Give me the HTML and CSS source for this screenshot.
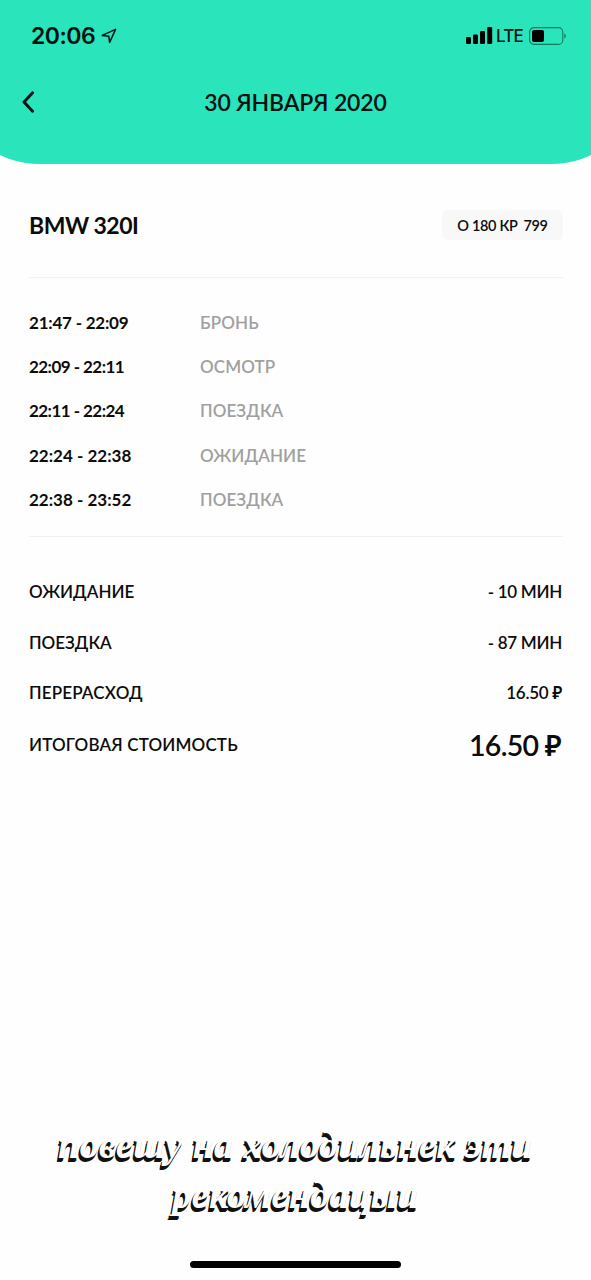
FILE: index.html
```html
<!DOCTYPE html>
<html lang="ru">

<head>
    <meta charset="UTF-8">
    <meta name="viewport" content="width=device-width, initial-scale=1.0">
    <title>30 января 2020</title>
    <link rel="stylesheet" href="styles.css">
</head>

<body>
    <!-- Header -->
    <header class="header">
        <div class="status-bar">
            <div class="status-left">
                <span class="clock">20:06</span>
                <svg class="location" width="16" height="16" viewBox="0 0 16 16">
                    <path d="M1.2 7.4 L14.6 1.4 L8.6 14.4 L7.8 8.2 Z" fill="none" stroke="#06120f" stroke-width="1.5" stroke-linejoin="round" />
                </svg>
            </div>
            <div class="status-right">
                <svg width="27" height="17" viewBox="0 0 27 17">
                    <rect x="0" y="10" width="5" height="7" rx="1.3" />
                    <rect x="7" y="7.5" width="5" height="9.5" rx="1.3" />
                    <rect x="14" y="4" width="5" height="13" rx="1.3" />
                    <rect x="21.2" y="0" width="5" height="17" rx="1.3" />
                </svg>
                <span class="network">LTE</span>
                <svg width="39" height="18" viewBox="0 0 39 18">
                    <rect x="0.6" y="0.6" width="33.2" height="16.8" rx="4.5" fill="none" stroke="#127a62" stroke-width="1.1" />
                    <rect x="3" y="3" width="12" height="12" rx="2" />
                    <path d="M35.3 6.2 Q38.6 9 35.3 11.8 Z" fill="#127a62" />
                </svg>
            </div>
        </div>
        <div class="title-bar">
            <a href="#" class="back">
                <svg width="14" height="22" viewBox="0 0 14 22">
                    <path d="M11.6 1.8 L3 11 L11.6 20.2" fill="none" stroke="#06120f" stroke-width="3" stroke-linejoin="round" stroke-linecap="round" />
                </svg>
            </a>
            <h1>30 ЯНВАРЯ 2020</h1>
        </div>
    </header>

    <main class="content">
        <!-- Car -->
        <section class="car">
            <h2>BMW 320I</h2>
            <div class="plate"><span>О 180 КР</span><span>799</span></div>
        </section>

        <!-- Timeline -->
        <section class="timeline">
            <div class="step"><span class="time narrow">21:47 - 22:09</span><span class="label">БРОНЬ</span></div>
            <div class="step"><span class="time narrower">22:09 - 22:11</span><span class="label">ОСМОТР</span></div>
            <div class="step"><span class="time narrower">22:11 - 22:24</span><span class="label">ПОЕЗДКА</span></div>
            <div class="step"><span class="time">22:24 - 22:38</span><span class="label">ОЖИДАНИЕ</span></div>
            <div class="step"><span class="time">22:38 - 23:52</span><span class="label">ПОЕЗДКА</span></div>
        </section>

        <!-- Summary -->
        <section class="summary">
            <div class="row"><span>ОЖИДАНИЕ</span><span class="value">- 10 МИН</span></div>
            <div class="row"><span>ПОЕЗДКА</span><span class="value">- 87 МИН</span></div>
            <div class="row"><span class="wide">ПЕРЕРАСХОД</span><span class="value">16.50 ₽</span></div>
            <div class="row total"><span class="wide">ИТОГОВАЯ СТОИМОСТЬ</span><span class="sum">16.50 ₽</span></div>
        </section>
    </main>

    <footer class="footer">
        <p class="caption">повешу на холодильнек эти<br>рекомендацыи</p>
        <div class="home-indicator"></div>
    </footer>
</body>

</html>
```

FILE: styles.css
```css
* {
    box-sizing: border-box;
    margin: 0;
    padding: 0;
}

body {
    display: flex;
    flex-direction: column;
    height: 1280px;
    background: #fefefe;
    color: #0c0c0c;
    font-family: Lato, "Noto Sans", sans-serif;
    font-weight: 600;
}
/* Header */

.header {
    height: 164px;
    background: #2ae4bc;
    /* Curve starts outside the screen edges */
    clip-path: inset(0 -40px 0 -40px round 0 0 80px 80px / 0 0 67px 67px);
    color: #06120f;
}

.status-bar {
    display: flex;
    justify-content: space-between;
    align-items: center;
    height: 71px;
    padding: 0 23px 0 31px;
}

.status-left,
.status-right {
    display: flex;
    align-items: center;
}

.clock {
    font-family: Inter, sans-serif;
    font-size: 23px;
    letter-spacing: -0.5px;
    width: 70px;
}

.network {
    font-family: Inter, sans-serif;
    font-size: 17px;
    font-weight: 500;
    width: 33px;
    margin-left: 3px;
    letter-spacing: -0.8px;
}

.title-bar {
    display: grid;
    grid-template-columns: 40px 1fr 40px;
    align-items: center;
    height: 61px;
    padding: 0 21px;
}

.back {
    display: flex;
}

h1 {
    font-size: 23px;
    font-weight: 600;
    letter-spacing: -0.15px;
    text-align: center;
}
/* Content */

.content {
    padding: 0 28px 0 29px;
}

.car {
    display: flex;
    justify-content: space-between;
    align-items: center;
    height: 114px;
    padding-top: 9px;
    border-bottom: 1px solid #f1f1f1;
}

.car h2 {
    font-size: 23px;
    font-weight: 700;
    letter-spacing: -0.5px;
}

.plate {
    display: flex;
    justify-content: center;
    align-items: center;
    gap: 6px;
    width: 121px;
    height: 30px;
    border-radius: 6px;
    background: #f8f8f8;
    font-size: 14.5px;
    letter-spacing: -0.35px;
}

.timeline {
    height: 259px;
    padding-top: 22.4px;
    border-bottom: 1px solid #f1f1f1;
}

.step {
    display: flex;
    align-items: center;
    height: 44.2px;
    font-size: 17px;
}

.time {
    width: 171px;
    font-weight: 700;
}

.narrow {
    letter-spacing: -0.22px;
}

.narrower {
    letter-spacing: -0.55px;
}

.label {
    color: #a0a0a0;
    letter-spacing: 0.1px;
}

.summary {
    padding-top: 29px;
}

.row {
    display: flex;
    justify-content: space-between;
    align-items: center;
    height: 50.7px;
    font-size: 17px;
}

.wide {
    letter-spacing: 0.15px;
}

.value {
    padding-right: 1px;
    letter-spacing: -0.3px;
}

.total {
    height: 53px;
}

.sum {
    padding-right: 2px;
    font-size: 28.5px;
    font-weight: 600;
    letter-spacing: -0.7px;
}
/* Footer */

.footer {
    display: flex;
    flex-direction: column;
    align-items: center;
    justify-content: space-between;
    height: 160px;
    margin-top: auto;
    padding-bottom: 12px;
}

.caption {
    font-family: "Liberation Serif", serif;
    font-size: 38px;
    font-style: italic;
    font-weight: 700;
    letter-spacing: 0.4px;
    line-height: 50px;
    text-align: center;
    color: #fefefe;
    text-shadow: -1px 1px #111, -1px 2px #111, -1px 3px #111, -2px 4px #111;
}

.home-indicator {
    width: 211px;
    height: 7px;
    border-radius: 4px;
    background: #000;
}
```
